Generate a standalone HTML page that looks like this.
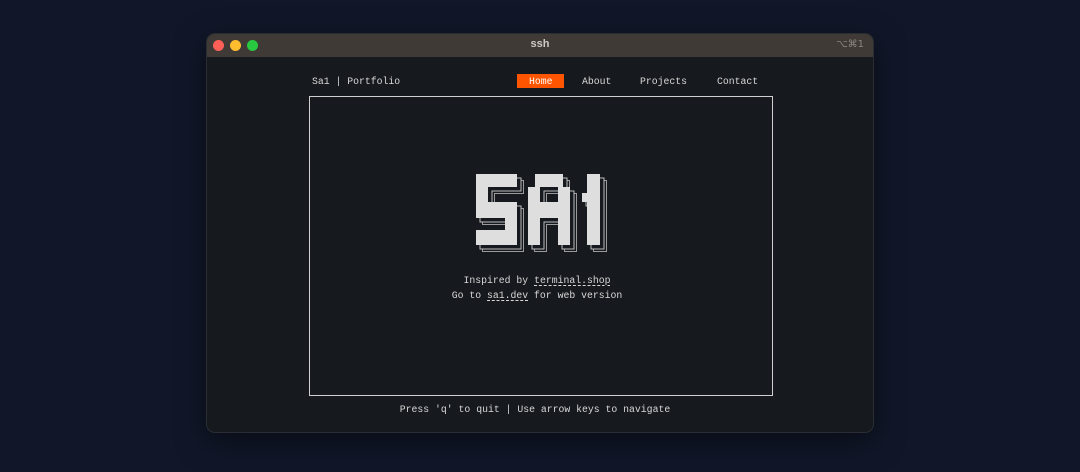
<!DOCTYPE html>
<html><head><meta charset="utf-8"><style>
html,body{margin:0;padding:0;width:1080px;height:472px;background:#111729;overflow:hidden}
.win{position:absolute;left:207px;top:34px;width:666px;height:398px;background:#16191e;border-radius:8px;overflow:hidden;box-shadow:0 0 0 1px #2a2d33,0 8px 30px rgba(0,0,0,.5)}
.tb{position:absolute;left:0;top:0;width:100%;height:23px;background:#3f3a36}
.dot{position:absolute;top:6px;width:11px;height:11px;border-radius:50%}
.t{position:absolute;font-family:"Liberation Mono",monospace;font-size:9.8px;color:#d8d8d8;white-space:pre;line-height:12px}
.title{position:absolute;left:0;width:100%;top:4px;text-align:center;font-family:"Liberation Sans",sans-serif;font-weight:bold;font-size:11px;color:#cfcac5}
.box{position:absolute;left:102px;top:62px;width:462px;height:298px;border:1px solid #cfcfcf}
u{text-decoration:underline dashed;text-underline-offset:2px}
</style></head><body>
<div class="win">
<div class="tb">
<div class="dot" style="left:6px;background:#fe5f57"></div>
<div class="dot" style="left:23px;background:#febc2e"></div>
<div class="dot" style="left:40px;background:#28c840"></div>
<div class="title">ssh</div>
<div style="position:absolute;right:9px;top:5px;font-family:'DejaVu Sans',sans-serif;font-size:10px;color:#8a8580">⌥⌘1</div>
</div>
<div class="t" style="left:105px;top:42px">Sa1 | Portfolio</div>
<div style="position:absolute;left:310px;top:40px;width:47px;height:14px;background:#ff5500"></div>
<div class="t" style="left:322px;top:42px;color:#fff">Home</div>
<div class="t" style="left:375px;top:42px">About</div>
<div class="t" style="left:433px;top:42px">Projects</div>
<div class="t" style="left:510px;top:42px">Contact</div>
<div class="box"></div>
<div class="t" style="left:-3px;width:666px;text-align:center;top:241px">Inspired by <u>terminal.shop</u></div>
<div class="t" style="left:-3px;width:666px;text-align:center;top:256px">Go to <u>sa1.dev</u> for web version</div>
<div class="t" style="left:-5px;width:666px;text-align:center;top:370px">Press 'q' to quit | Use arrow keys to navigate</div>
</div>
<svg width="1080" height="472" style="position:absolute;left:0;top:0">
<defs>
<g id="L">
<path d="M476 174H517V187H488V202H517V245H476V230H505V218H476Z"/>
<path fill-rule="evenodd" d="M535 174H563V187H570V245H558V218H540V245H528V187H535ZM540 187H558V202H540Z"/>
<path d="M587 174H600V245H587V202H582V193H587Z"/>
</g>
</defs>
<use href="#L" transform="translate(6.5,6.5)" fill="none" stroke="#9a9a9a" stroke-width="1"/>
<use href="#L" transform="translate(4,4)" fill="#16191e" stroke="#bdbdbd" stroke-width="1"/>
<use href="#L" fill="#dedede"/>
</svg>
</body></html>
